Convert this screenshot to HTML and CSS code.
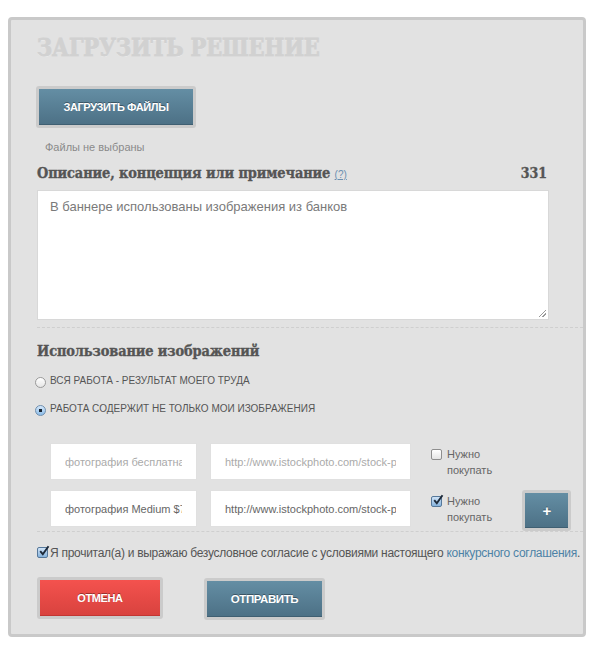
FILE: index.html
```html
<!DOCTYPE html>
<html lang="ru">
<head>
<meta charset="utf-8">
<title>Загрузить решение</title>
<link rel="stylesheet" href="styles.css">
</head>
<body>
<div class="panel">
  <h1 class="title">ЗАГРУЗИТЬ РЕШЕНИЕ</h1>
  <button class="btn btn-blue btn-upload">ЗАГРУЗИТЬ ФАЙЛЫ</button>
  <div class="no-files">Файлы не выбраны</div>
  <div class="desc-head">
    <h2 class="heading">Описание, концепция или примечание <a class="help" href="#">(?)</a></h2>
    <span class="counter">331</span>
  </div>
  <div class="textarea">В баннере использованы изображения из банков<span class="grip"></span></div>
  <div class="dash dash-1"></div>
  <h2 class="heading heading-usage">Использование изображений</h2>
  <div class="radios">
    <label class="radio"><span class="radio-box"></span><span>ВСЯ РАБОТА - РЕЗУЛЬТАТ МОЕГО ТРУДА</span></label>
    <label class="radio"><span class="radio-box radio-on"></span><span>РАБОТА СОДЕРЖИТ НЕ ТОЛЬКО МОИ ИЗОБРАЖЕНИЯ</span></label>
  </div>
  <div class="rows">
    <div class="row">
      <input class="field field-name" type="text" placeholder="фотография бесплатная">
      <input class="field field-url" type="text" placeholder="http://www.istockphoto.com/stock-photo">
      <label class="buy"><span class="cb"></span><span>Нужно<br>покупать</span></label>
    </div>
    <div class="row">
      <input class="field field-name" type="text" value="фотография Medium $78">
      <input class="field field-url" type="text" value="http://www.istockphoto.com/stock-photo">
      <label class="buy"><span class="cb cb-on"><svg viewBox="0 0 12 12" width="12" height="12"><path d="M2.2 6.2 L4.8 9.2 L10.5 1.2" fill="none" stroke="#1d2a3a" stroke-width="1.9"/></svg></span><span>Нужно<br>покупать</span></label>
      <button class="btn btn-blue btn-plus">+</button>
    </div>
  </div>
  <div class="dash dash-2"></div>
  <label class="agree"><span class="cb cb-on"><svg viewBox="0 0 12 12" width="12" height="12"><path d="M2.2 6.2 L4.8 9.2 L10.5 1.2" fill="none" stroke="#1d2a3a" stroke-width="1.9"/></svg></span><span class="agree-text">Я прочитал(а) и выражаю безусловное согласие с условиями настоящего <a href="#" class="link">конкурсного соглашения</a>.</span></label>
  <div class="actions">
    <button class="btn btn-red btn-cancel">ОТМЕНА</button>
    <button class="btn btn-blue btn-send">ОТПРАВИТЬ</button>
  </div>
</div>
</body>
</html>
```
FILE: styles.css
```css
html, body {
  margin: 0;
  padding: 0;
  background: #ffffff;
}
body {
  font-family: "Liberation Sans", Arial, sans-serif;
  color: #555;
}
.panel {
  box-sizing: border-box;
  margin: 17px 0 0 8px;
  width: 578px;
  height: 620px;
  border: 3px solid #c9c9c9;
  border-radius: 4px;
  background: #e2e2e2;
  padding: 14px 2px 0 26px;
  display: flex;
  flex-direction: column;
  align-items: flex-start;
}
.title {
  margin: 0;
  font-family: "DejaVu Serif Condensed", "DejaVu Serif", serif;
  font-weight: bold;
  font-size: 23.3px;
  line-height: 28px;
  color: #d1d1d1;
  -webkit-text-stroke: 0.8px #d1d1d1;
  letter-spacing: -0.1px;
  text-shadow: 0 1px 0 rgba(255,255,255,0.35);
}
.btn {
  box-sizing: border-box;
  border: 3px solid #cbcbcb;
  border-radius: 3px;
  background-clip: padding-box;
  color: #fff;
  font-family: "Liberation Sans", Arial, sans-serif;
  font-weight: bold;
  font-size: 11px;
  letter-spacing: -0.4px;
  text-shadow: 0 -1px 0 rgba(0,0,0,0.35);
  padding: 0;
  cursor: pointer;
}
.btn-blue {
  background-image: linear-gradient(#648ea4, #4c7085);
  box-shadow: inset 0 -1px 0 #3f5f72;
}
.btn-red {
  background-image: linear-gradient(#f4524e, #d8423e);
  box-shadow: inset 0 -1px 0 #c23632;
}
.btn-upload {
  margin: 24px 0 0 -1px;
  width: 160px;
  height: 42px;
}
.no-files {
  margin: 12px 0 0 8px;
  font-size: 11px;
  color: #8a8a8a;
  line-height: 14px;
}
.desc-head {
  margin-top: 10px;
  width: 511px;
  display: flex;
  justify-content: space-between;
  align-items: baseline;
}
.heading {
  margin: 0;
  font-family: "DejaVu Serif Condensed", "DejaVu Serif", serif;
  font-weight: bold;
  font-size: 14.4px;
  line-height: 18px;
  color: #555;
  -webkit-text-stroke: 0.35px #555;
  letter-spacing: -0.1px;
}
.help {
  font-family: "Liberation Sans", Arial, sans-serif;
  font-weight: normal;
  font-size: 10px;
  color: #6a8fb0;
  -webkit-text-stroke: 0;
  text-decoration: underline;
  letter-spacing: 0;
}
.counter {
  font-family: "DejaVu Serif Condensed", "DejaVu Serif", serif;
  font-weight: bold;
  font-size: 14px;
  color: #555;
  -webkit-text-stroke: 0.35px #555;
  margin-right: 1px;
}
.textarea {
  position: relative;
  box-sizing: border-box;
  margin-top: 6px;
  width: 512px;
  height: 130px;
  background: #fff;
  border: 1px solid #d8d8d8;
  padding: 8px 12px;
  font-size: 13px;
  line-height: 16px;
  color: #7a7a7a;
}
.grip {
  position: absolute;
  right: 2px;
  bottom: 2px;
  width: 7px;
  height: 7px;
  background: linear-gradient(135deg, transparent 45%, #999 45%, #999 55%, transparent 55%, transparent 70%, #999 70%, #999 80%, transparent 80%);
}
.dash {
  width: 546px;
  height: 0;
  border-top: 1px dashed #cfcfcf;
}
.dash-1 { margin-top: 7px; }
.heading-usage {
  margin-top: 14px;
}
.radios {
  margin-top: 13px;
  display: flex;
  flex-direction: column;
  gap: 13px;
}
.radio {
  display: flex;
  align-items: center;
  gap: 4px;
  font-size: 10px;
  line-height: 14px;
  color: #555;
  margin-left: -2px;
  margin-top: 1px;
}
.radio-box {
  box-sizing: border-box;
  width: 11px;
  height: 11px;
  border-radius: 50%;
  border: 1px solid #9a9a9a;
  background: linear-gradient(#ffffff, #e6e6e6);
  margin-top: 3px;
}
.radio-on {
  border-color: #6f8fae;
  background: radial-gradient(circle, #1a2430 0 1.6px, transparent 2px), linear-gradient(#d5e8fb, #8bbce8);
}
.rows {
  margin-top: 27px;
  margin-left: 13px;
  display: flex;
  flex-direction: column;
  gap: 10px;
}
.row {
  display: flex;
  align-items: flex-start;
  height: 37px;
}
.field {
  box-sizing: border-box;
  height: 37px;
  margin: 0;
  background: #fff;
  border: 1px solid #e0e0e0;
  font-family: "Liberation Sans", Arial, sans-serif;
  font-size: 11px;
  padding: 0 14px;
  color: #666;
  outline: none;
}
.field::placeholder { color: #aaa; opacity: 1; }
.field-name { width: 147px; }
.field-url { width: 201px; margin-left: 13px; }
.buy {
  margin-left: 20px;
  display: flex;
  align-items: flex-start;
  gap: 5px;
  font-size: 11px;
  line-height: 16px;
  color: #666;
  padding-top: 3px;
}
.cb {
  box-sizing: border-box;
  width: 11px;
  height: 11px;
  margin-top: 3px;
  border: 1px solid #8e8e8e;
  border-radius: 2px;
  background: linear-gradient(#ffffff, #e4e4e4);
  position: relative;
  flex: none;
}
.cb-on {
  border-color: #56789a;
  background: linear-gradient(#cfe3f7, #86b3dd);
}
.cb-on svg {
  position: absolute;
  left: 0;
  top: -3px;
}
.btn-plus {
  margin-left: 30px;
  width: 49px;
  height: 41px;
  font-size: 15px;
  line-height: 1;
}
.dash-2 { margin-top: 4px; }
.agree {
  margin-top: 13px;
  display: flex;
  align-items: flex-start;
  gap: 2px;
  font-size: 12px;
  line-height: 16px;
  color: #555;
  white-space: nowrap;
}
.agree-text { letter-spacing: -0.28px; }
.agree .cb { margin-top: 2px; }
.link {
  color: #4d82a6;
  text-decoration: none;
}
.actions {
  margin-top: 16px;
  display: flex;
  gap: 41px;
}
.btn-cancel {
  width: 126px;
  height: 42px;
}
.btn-send {
  width: 121px;
  height: 42px;
  margin-top: 1px;
  font-size: 11.5px;
}
```
